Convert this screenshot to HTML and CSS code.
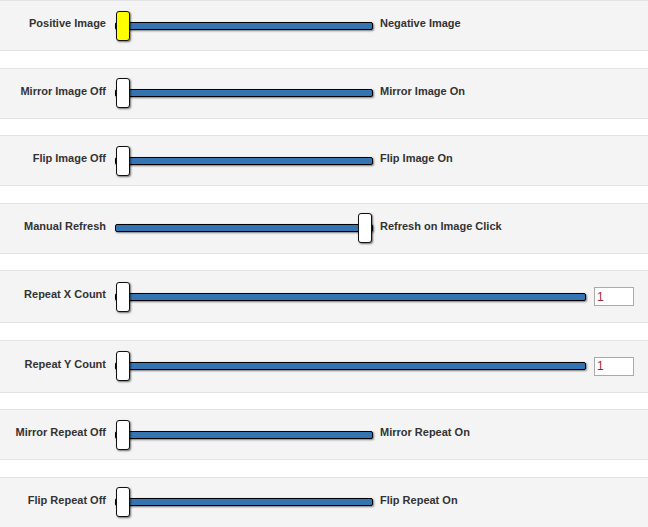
FILE: index.html
```html
<!DOCTYPE html>
<html>
<head>
<meta charset="utf-8">
<link rel="stylesheet" href="styles.css">
</head>
<body>
<div class="page">
  <div class="row">
    <span class="lbl">Positive Image</span>
    <div class="slider"><div class="track"></div><span class="handle min active"></span></div>
    <span class="rlbl">Negative Image</span>
  </div>
  <div class="row">
    <span class="lbl">Mirror Image Off</span>
    <div class="slider"><div class="track"></div><span class="handle min"></span></div>
    <span class="rlbl">Mirror Image On</span>
  </div>
  <div class="row">
    <span class="lbl">Flip Image Off</span>
    <div class="slider"><div class="track"></div><span class="handle min"></span></div>
    <span class="rlbl">Flip Image On</span>
  </div>
  <div class="row">
    <span class="lbl">Manual Refresh</span>
    <div class="slider"><div class="track"></div><span class="handle max"></span></div>
    <span class="rlbl">Refresh on Image Click</span>
  </div>
  <div class="row tall">
    <span class="lbl">Repeat X Count</span>
    <div class="slider long"><div class="track"></div><span class="handle min"></span></div>
    <input class="count" type="text" value="1">
  </div>
  <div class="row tall">
    <span class="lbl">Repeat Y Count</span>
    <div class="slider long"><div class="track"></div><span class="handle min"></span></div>
    <input class="count" type="text" value="1">
  </div>
  <div class="row">
    <span class="lbl">Mirror Repeat Off</span>
    <div class="slider"><div class="track"></div><span class="handle min"></span></div>
    <span class="rlbl">Mirror Repeat On</span>
  </div>
  <div class="row">
    <span class="lbl">Flip Repeat Off</span>
    <div class="slider"><div class="track"></div><span class="handle min"></span></div>
    <span class="rlbl">Flip Repeat On</span>
  </div>
</div>
</body>
</html>
```
FILE: styles.css
```css
html, body {
  margin: 0;
  padding: 0;
  background: #ffffff;
}
body {
  font-family: "Liberation Sans", Arial, sans-serif;
  font-size: 11px;
  font-weight: bold;
  color: #333333;
}
.page {
  display: flex;
  flex-direction: column;
}
.row {
  display: flex;
  align-items: center;
  box-sizing: border-box;
  height: 51px;
  margin-bottom: 16.5px;
  background: #f4f4f4;
  border-top: 1px solid #e3e3e3;
  border-bottom: 1px solid #e3e3e3;
}
.row.tall {
  height: 53px;
}
.lbl {
  width: 106px;
  flex: none;
  text-align: right;
  margin-right: 9px;
  padding-bottom: 5px;
  white-space: nowrap;
}
.slider {
  position: relative;
  flex: none;
  width: 258px;
  height: 30px;
  display: flex;
  align-items: center;
}
.slider.long {
  width: 471px;
}
.track {
  flex: 1;
  height: 8px;
  box-sizing: border-box;
  background: #3574b3;
  border: 1px solid #000000;
  border-radius: 2px;
  box-shadow: 1px 1px 2px rgba(0, 0, 0, 0.5);
}
.handle {
  position: absolute;
  top: 0;
  width: 14px;
  height: 30px;
  box-sizing: border-box;
  background: #ffffff;
  border: 1px solid #111111;
  border-radius: 3px;
  box-shadow: 1px 1px 2px rgba(0, 0, 0, 0.55);
}
.handle.min {
  left: 1px;
}
.handle.max {
  right: 1px;
}
.handle.active {
  background: #ffff00;
}
.rlbl {
  margin-left: 7px;
  padding-bottom: 5px;
  white-space: nowrap;
}
.count {
  margin: 0 0 0 8px;
  width: 40px;
  height: 19px;
  box-sizing: border-box;
  padding: 0 0 0 2px;
  border: 1px solid #aaaaaa;
  background: #ffffff;
  font-family: "Liberation Sans", Arial, sans-serif;
  font-size: 12px;
  font-weight: normal;
  color: #9b2a2a;
  outline: none;
}
```
